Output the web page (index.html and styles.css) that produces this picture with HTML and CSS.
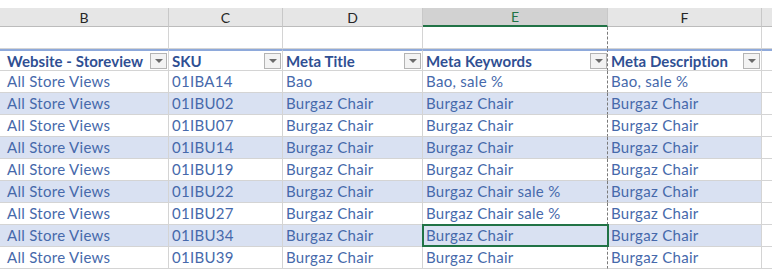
FILE: index.html
```html
<!DOCTYPE html>
<html>
<head>
<meta charset="utf-8">
<link rel="stylesheet" href="styles.css">
</head>
<body>
<div class="sheet">
  <div class="topstrip"></div>
  <div class="row colhdr">
    <div class="c">B</div>
    <div class="c">C</div>
    <div class="c">D</div>
    <div class="c sel">E</div>
    <div class="c">F</div>
    <div class="c"></div>
  </div>
  <div class="row blank">
    <div class="c"></div><div class="c"></div><div class="c"></div><div class="c e"></div><div class="c f"></div><div class="c"></div>
  </div>
  <div class="row thead">
    <div class="c first"><span>Website - Storeview</span><i class="dd"></i></div>
    <div class="c"><span>SKU</span><i class="dd"></i></div>
    <div class="c"><span>Meta Title</span><i class="dd"></i></div>
    <div class="c e"><span>Meta Keywords</span><i class="dd"></i></div>
    <div class="c f"><span>Meta Description</span><i class="dd"></i></div>
    <div class="c"></div>
  </div>
  <div class="row data">
    <div class="c first">All Store Views</div><div class="c">01IBA14</div><div class="c">Bao</div><div class="c e">Bao, sale %</div><div class="c f">Bao, sale %</div><div class="c"></div>
  </div>
  <div class="row data band">
    <div class="c first">All Store Views</div><div class="c">01IBU02</div><div class="c">Burgaz Chair</div><div class="c e">Burgaz Chair</div><div class="c f">Burgaz Chair</div><div class="c"></div>
  </div>
  <div class="row data">
    <div class="c first">All Store Views</div><div class="c">01IBU07</div><div class="c">Burgaz Chair</div><div class="c e">Burgaz Chair</div><div class="c f">Burgaz Chair</div><div class="c"></div>
  </div>
  <div class="row data band">
    <div class="c first">All Store Views</div><div class="c">01IBU14</div><div class="c">Burgaz Chair</div><div class="c e">Burgaz Chair</div><div class="c f">Burgaz Chair</div><div class="c"></div>
  </div>
  <div class="row data">
    <div class="c first">All Store Views</div><div class="c">01IBU19</div><div class="c">Burgaz Chair</div><div class="c e">Burgaz Chair</div><div class="c f">Burgaz Chair</div><div class="c"></div>
  </div>
  <div class="row data band">
    <div class="c first">All Store Views</div><div class="c">01IBU22</div><div class="c">Burgaz Chair</div><div class="c e">Burgaz Chair sale %</div><div class="c f">Burgaz Chair</div><div class="c"></div>
  </div>
  <div class="row data">
    <div class="c first">All Store Views</div><div class="c">01IBU27</div><div class="c">Burgaz Chair</div><div class="c e">Burgaz Chair sale %</div><div class="c f">Burgaz Chair</div><div class="c"></div>
  </div>
  <div class="row data band">
    <div class="c first">All Store Views</div><div class="c">01IBU34</div><div class="c">Burgaz Chair</div><div class="c e active">Burgaz Chair</div><div class="c f">Burgaz Chair</div><div class="c"></div>
  </div>
  <div class="row data">
    <div class="c first">All Store Views</div><div class="c">01IBU39</div><div class="c">Burgaz Chair</div><div class="c e">Burgaz Chair</div><div class="c f">Burgaz Chair</div><div class="c"></div>
  </div>
</div>
</body>
</html>
```
FILE: styles.css
```css
* { box-sizing: border-box; }
html, body { margin: 0; padding: 0; background: #fff; }
body { font-family: Lato, "Open Sans", sans-serif; font-size: 15px; letter-spacing: 0.3px; width: 772px; height: 275px; overflow: hidden; }

.topstrip { height: 8px; }

.row {
  display: grid;
  grid-template-columns: 169px 114px 140px 185px 154px 10px;
  height: 22px;
}
.c {
  border-right: 1px solid #d4d4d4;
  border-bottom: 1px solid #d4d4d4;
  padding: 0 3px 2px;
  white-space: nowrap;
  overflow: hidden;
  display: flex;
  align-items: flex-end;
  position: relative;
}
.c.first { padding-left: 7px; }
.c:last-child { border-right: none; }

.colhdr { height: 19px; }
.colhdr .c {
  background: #e6e6e6;
  border-right: 1px solid #c8c8c8;
  border-bottom: 1px solid #bcbcbc;
  justify-content: center;
  align-items: center;
  padding: 0;
  color: #262626;
  font-size: 14px;
  letter-spacing: 0;
}
.colhdr .c:last-child { border-right: none; }
.colhdr .c.sel {
  background: #d2d2d2;
  color: #217346;
  border-bottom: 2px solid #217346;
}

.e { border-right: none; }
.f { border-left: 1px dashed #7a7a7a; margin-left: -1px; }

.thead .c {
  border-top: 2px solid #8ea9db;
  font-weight: bold;
  letter-spacing: 0.05px;
  color: #2f4f93;
  justify-content: space-between;
  align-items: center;
  padding-top: 1px;
  padding-bottom: 0;
  padding-right: 1px;
}
.thead .c.e { border-right: none; }

.dd {
  width: 17px;
  height: 16px;
  border: 1px solid #b4b4b4;
  background: #f3f3f3;
  display: flex;
  align-items: center;
  justify-content: center;
  flex: none;
}
.dd::after {
  content: "";
  border-left: 4px solid transparent;
  border-right: 4px solid transparent;
  border-top: 4px solid #6b6b6b;
}

.data .c { color: #4669ab; }
.data.band .c { background: #d9e1f2; }
.data .c:last-child { background: #fff; }

.c.active { overflow: visible; z-index: 2; }
.active::after {
  content: "";
  position: absolute;
  left: -1px;
  top: -1px;
  right: -1px;
  bottom: -1px;
  border: 2px solid #217346;
}
```
